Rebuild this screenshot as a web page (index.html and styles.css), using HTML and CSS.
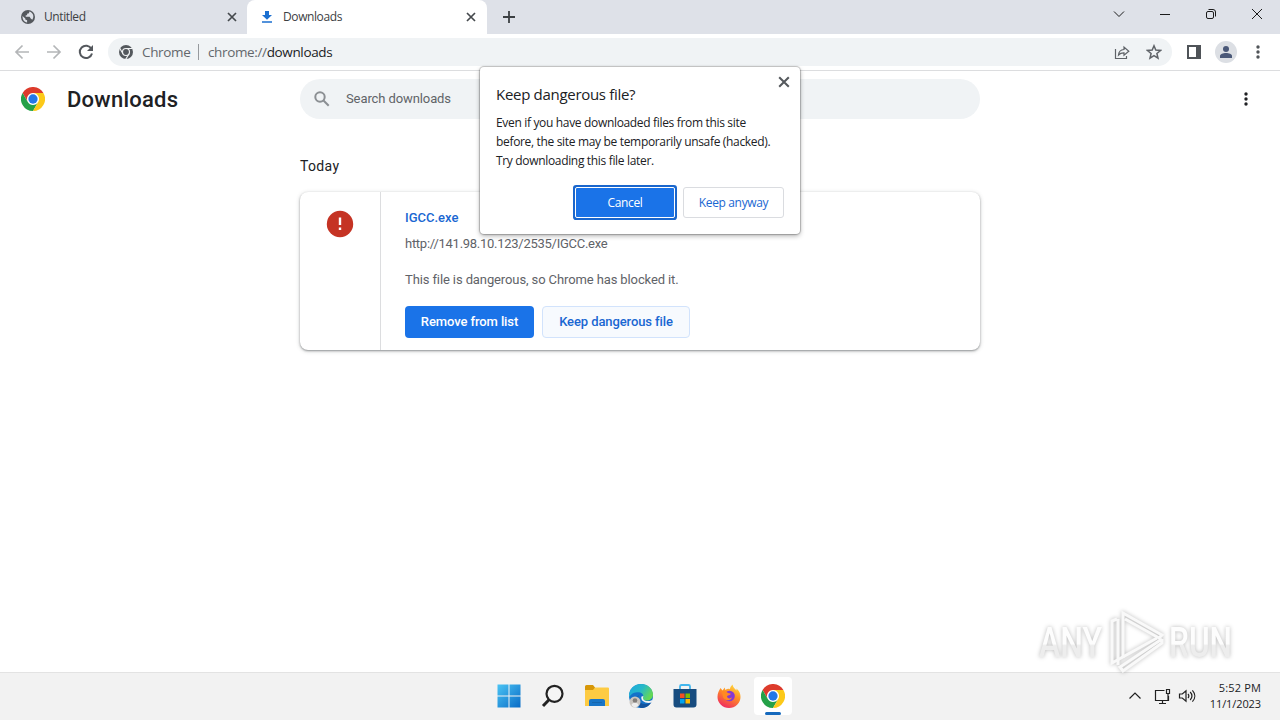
FILE: index.html
```html
<!DOCTYPE html>
<html lang="en">
<head>
  <meta charset="utf-8">
  <title>Downloads</title>
  <link rel="stylesheet" href="styles.css">
</head>

<body>
<svg class="symbols" width="0" height="0">
  <symbol id="chrome" viewBox="0 0 48 48">
    <circle cx="24" cy="24" r="13" fill="#fff"/>
    <path fill="#dd3b2c" d="M24 12H44.8A24 24 0 0 0 3.2 12L13.6 30A12 12 0 0 1 24 12z"/>
    <path fill="#24a148" d="M13.6 30L3.2 12A24 24 0 0 0 24 48L34.4 30A12 12 0 0 1 13.6 30z"/>
    <path fill="#fcc919" d="M34.4 30L24 48A24 24 0 0 0 44.8 12H24A12 12 0 0 1 34.4 30z"/>
    <circle cx="24" cy="24" r="9.3" fill="#2377e8"/>
  </symbol>
  <symbol id="close" viewBox="0 0 10 10">
    <path d="M1 1l8 8M9 1l-8 8" fill="none" stroke="currentColor" stroke-width="1.7"/>
  </symbol>
  <symbol id="dots" viewBox="0 0 4 14">
    <circle cx="2" cy="2" r="1.7"/><circle cx="2" cy="7" r="1.7"/><circle cx="2" cy="12" r="1.7"/>
  </symbol>
</svg>

<div class="tab-strip">
  <div class="tab">
    <svg class="globe" width="14" height="14" viewBox="0 0 14 14">
      <circle cx="7" cy="7" r="7" fill="#54585d"/>
      <path d="M1.5 5.9L4.3 8.6V9.4L6.1 10.3V12.4C3.2 12 1.4 9.6 1.5 5.9zM8.3 1.6L8 3.3L6.1 3.7V5.3H4.7V6.7H8.6L9.7 8.6L11.3 9.7C13.3 7 12.6 2.9 8.3 1.6z" fill="#dee1e8"/>
    </svg>
    <span class="tab-title">Untitled</span>
    <svg class="tab-close" width="10" height="10"><use href="#close"/></svg>
  </div>
  <div class="tab active">
    <svg class="down" width="12" height="14" viewBox="0 0 12 14">
      <path d="M4 1h4v4h3L6 9.700L1 5h3zM1 11.200h10v1.600H1z" fill="#1b6fd0"/>
    </svg>
    <span class="tab-title">Downloads</span>
    <svg class="tab-close" width="10" height="10"><use href="#close"/></svg>
  </div>
  <svg class="new-tab" width="12" height="12" viewBox="0 0 12 12"><path d="M6 0v12M0 6h12" stroke="#3c4043" stroke-width="1.800"/></svg>
  <div class="window-buttons">
    <svg width="12" height="12" viewBox="0 0 12 12"><path d="M1 3.500l5 5 5-5"/></svg>
    <svg width="12" height="12" viewBox="0 0 12 12"><path d="M1 6.500h10"/></svg>
    <svg width="12" height="12" viewBox="0 0 12 12"><rect x="1.500" y="3.500" width="7" height="7" rx="1.500"/><path d="M3.500 1.500h4.500a2.500 2.500 0 0 1 2.500 2.500v4.500"/></svg>
    <svg width="12" height="12" viewBox="0 0 12 12"><path d="M1 1l10 10M11 1l-10 10"/></svg>
  </div>
</div>

<div class="toolbar">
  <svg class="nav" width="16" height="16" viewBox="0 0 16 16"><path d="M15 8H2M8.500 1.500L2 8l6.500 6.500"/></svg>
  <svg class="nav" width="16" height="16" viewBox="0 0 16 16"><path d="M1 8h13M7.500 1.500L14 8l-6.500 6.500"/></svg>
  <svg class="nav reload" width="16" height="16" viewBox="0 0 16 16"><path d="M13.400 4.800A6.200 6.200 0 1 0 14 9.500"/><path class="head" d="M15 1v6H9z"/></svg>
  <div class="omnibox">
    <svg width="14" height="14" viewBox="0 0 48 48">
      <circle cx="24" cy="24" r="24" fill="#54585d"/>
      <circle cx="24" cy="24" r="12" fill="none" stroke="#f1f3f4" stroke-width="4"/>
      <path d="M24 12H46M13.600 30L2.500 11M34.400 30L23 49" stroke="#f1f3f4" stroke-width="4"/>
    </svg>
    <span class="chip">Chrome</span>
    <span class="url">chrome://<b>downloads</b></span>
    <svg class="share" width="16" height="16" viewBox="0 0 16 16">
      <path d="M1.500 5v9.500h11V12M4.500 11C4.800 7.500 6.500 5.700 10 5.500V3l4.800 4.200L10 11.200V8.800C7.500 8.700 6 9.300 4.500 11z"/>
    </svg>
    <svg class="star" width="16" height="16" viewBox="0 0 16 16">
      <path d="M8 1.800l1.800 4.300 4.700.4-3.600 3 1.100 4.600L8 11.700l-4 2.400 1.100-4.600-3.600-3 4.700-.4z"/>
    </svg>
  </div>
  <svg class="panel" width="14" height="14" viewBox="0 0 14 14"><path d="M0 0h14v14H0zM2 2v10h7V2z" fill="#4f5358" fill-rule="evenodd"/></svg>
  <svg class="avatar" width="22" height="22" viewBox="0 0 22 22"><circle cx="11" cy="11" r="11" fill="#dcdfe4"/><circle cx="11" cy="8" r="3" fill="#4a5878"/><path d="M5 17v-2c0-2 3-3 6-3s6 1 6 3v2z" fill="#4a5878"/></svg>
  <svg class="menu" width="4" height="14"><use href="#dots"/></svg>
</div>

<main class="page">
  <header class="page-header">
    <svg class="logo" width="24" height="24"><use href="#chrome"/></svg>
    <h1>Downloads</h1>
    <div class="search">
      <svg width="16" height="16" viewBox="0 0 16 16"><circle cx="6" cy="6" r="4.700"/><path d="M9.500 9.500l5.200 5.200"/></svg>
      <span>Search downloads</span>
    </div>
    <svg class="more" width="4" height="14"><use href="#dots"/></svg>
  </header>

  <section class="downloads">
    <h2>Today</h2>
    <div class="card">
      <div class="card-icon">
        <svg width="28" height="28" viewBox="0 0 28 28"><circle cx="14" cy="14" r="13.200" fill="#c53324"/><path d="M12.800 7.500h2.400v7.500h-2.400zM12.800 17.500h2.400v2.500h-2.400z" fill="#fff"/></svg>
      </div>
      <div class="card-body">
        <a class="file-name">IGCC.exe</a>
        <span class="file-url">http://141.98.10.123/2535/IGCC.exe</span>
        <p>This file is dangerous, so Chrome has blocked it.</p>
        <div class="actions">
          <button class="primary remove">Remove from list</button>
          <button class="keep">Keep dangerous file</button>
        </div>
      </div>
    </div>
  </section>
</main>

<div class="dialog">
  <svg class="dialog-close" width="12" height="12"><use href="#close"/></svg>
  <h3>Keep dangerous file?</h3>
  <p>
    Even if you have downloaded files from this site<br>
    before, the site may be temporarily unsafe (hacked).<br>
    Try downloading this file later.
  </p>
  <div class="dialog-actions">
    <button class="primary cancel">Cancel</button>
    <button class="anyway">Keep anyway</button>
  </div>
</div>

<svg class="watermark" width="230" height="76" viewBox="0 0 230 76">
  <defs>
    <linearGradient id="fade" gradientUnits="userSpaceOnUse" x1="0" y1="20" x2="0" y2="56">
      <stop offset=".55" stop-color="#fdfdfd"/><stop offset=".6" stop-color="#ededed"/>
    </linearGradient>
  </defs>
  <g class="wm-text" fill="url(#fade)">
    <text x="9" y="53" textLength="63" lengthAdjust="spacingAndGlyphs">ANY</text>
    <text x="139" y="53" textLength="63" lengthAdjust="spacingAndGlyphs">RUN</text>
  </g>
  <g class="wm-logo">
    <path d="M87 15L82 17V59L127 34"/>
    <path d="M88 61V15"/>
    <path d="M93 54V9L132 31L129 34L95 15"/>
    <path d="M132 35V39L93 67L90 63L132 35"/>
  </g>
</svg>

<footer class="taskbar">
  <div class="apps">
    <div class="app">
      <svg width="24" height="24" viewBox="0 0 24 24">
        <defs><linearGradient id="win" gradientUnits="userSpaceOnUse" x1="0" y1="0" x2="24" y2="24"><stop offset="0" stop-color="#4cc6f5"/><stop offset="1" stop-color="#0869c5"/></linearGradient></defs>
        <path d="M.5.5h11v11H.5zM12.500.5h11v11h-11zM.5 12.500h11v11H.5zM12.500 12.500h11v11h-11z" fill="url(#win)"/>
      </svg>
    </div>
    <div class="app">
      <svg width="24" height="24" viewBox="0 0 24 24"><circle cx="13.500" cy="9.800" r="8" fill="#f5f5f5" stroke="#222" stroke-width="2.200"/><path d="M8 15.800L2 22" stroke="#222" stroke-width="3"/></svg>
    </div>
    <div class="app">
      <svg width="26" height="24" viewBox="0 0 26 24">
        <path d="M1 2.500a1.500 1.500 0 0 1 1.500-1.500H9l2 2.500v4H1z" fill="#d79708"/>
        <path d="M1 6h8l2-2.500h13a1 1 0 0 1 1 1V22H1z" fill="#fdcb43"/>
        <path d="M5 22v-5a2 2 0 0 1 2-2h12a2 2 0 0 1 2 2v5z" fill="#1875c7"/><path d="M8 18.500h10" stroke="#1566ad"/>
      </svg>
    </div>
    <div class="app">
      <svg width="24" height="24" viewBox="0 0 24 24">
        <defs><linearGradient id="edge" x1="0" y1="0" x2="1" y2=".5"><stop offset="0" stop-color="#1ca7e0"/><stop offset=".55" stop-color="#27b9c7"/><stop offset="1" stop-color="#65d855"/></linearGradient></defs>
        <circle cx="12" cy="12" r="12" fill="#1472c9"/>
        <path d="M0 11C.5 4.500 5.700 0 12 0c7 0 12 5 12 10.500 0 4-3 6-6.500 6-3 0-4.500-1-3.500-3 1.500-4-3-5.700-6-5.200C4 8.500 1 11 0 14z" fill="url(#edge)"/>
        <path d="M11 10c-4 3-2 10 5 10 2.500 0 4.500-.5 6.500-2C20 22.500 16 24 12 24 7 22 5 14 11 10z" fill="#12539e"/>
        <path d="M14.500 12c-1.500 3 .5 5 4.500 5 2.500 0 4-.7 5-1.500l-1.500 3C17 20 11 17 12.500 12.500z" fill="#f3f3f3"/>
        <circle cx="6" cy="18" r="5.500" fill="#c9c5c0"/><circle cx="6" cy="16.500" r="2.300" fill="#817d7a"/><path d="M2.500 21c1-3 6-3 7 0-2 3-5 3-7 0z" fill="#eee"/>
      </svg>
    </div>
    <div class="app">
      <svg width="24" height="24" viewBox="0 0 24 24">
        <path d="M7 7V2.500A1.500 1.500 0 0 1 8.500 1h7A1.500 1.500 0 0 1 17 2.500V7" fill="none" stroke="#42b6ed" stroke-width="1.800"/>
        <path d="M.5 5h23v15.500a3 3 0 0 1-3 3h-17a3 3 0 0 1-3-3z" fill="#174c7f"/>
        <path d="M7 9.500h4.500V14H7z" fill="#f25022"/><path d="M12.500 9.500H17V14h-4.500z" fill="#7fba00"/><path d="M7 15h4.500v4.500H7z" fill="#00a4ef"/><path d="M12.500 15H17v4.500h-4.500z" fill="#ffb900"/>
      </svg>
    </div>
    <div class="app">
      <svg width="24" height="24" viewBox="0 0 24 24">
        <defs><linearGradient id="fox" x1=".8" y1="0" x2=".3" y2="1"><stop offset="0" stop-color="#ffe040"/><stop offset=".45" stop-color="#ff8c25"/><stop offset="1" stop-color="#ef2962"/></linearGradient></defs>
        <path d="M3.500 4L5.500 6.500 7.800 3.500 8.300 6C10 5 11.500 4.500 13 5.200 13 3.500 14 2 15.500.5 16 3.500 18 5 19.500 6.500V4.500C22.500 7 23.500 10 23.500 13A11.500 11 0 0 1 .5 13C.5 9 2 6.500 3.500 4z" fill="url(#fox)"/>
        <circle cx="12.500" cy="12" r="5.300" fill="#8638d5"/><path d="M5 8c3-1 5 0 6 1l3 .8c-1 2-3 1.200-4 2.500 0 2 3 3 5 1-1 4-7 4-9 0z" fill="#ff8a23"/>
      </svg>
    </div>
    <div class="app open"><svg width="24" height="24"><use href="#chrome"/></svg></div>
  </div>
  <div class="tray">
    <svg width="12" height="8" viewBox="0 0 12 8"><path d="M.5 6.500L6 1l5.500 5.500"/></svg>
    <svg class="network" width="17" height="17" viewBox="0 0 17 17"><path d="M10.500 2.500h-9v10h13V8M5 15.500h7M8.500 12.500v3M12.500 1.500h3v4h-3zM14 5.500v7"/></svg>
    <svg class="volume" width="18" height="16" viewBox="0 0 18 16"><path d="M1.500 6h2.800L8 2.800v10.400L4.300 10H1.500zM10 6c1 1.200 1 2.800 0 4M12.200 4c2.200 2.500 2.200 5.500 0 8M14.400 2.300c3.200 3.500 3.200 8 0 11.400"/></svg>
    <div class="clock"><span class="time">5:52 PM</span><span>11/1/2023</span></div>
  </div>
</footer>
</body>
</html>
```
FILE: styles.css
```css
* {
  box-sizing: border-box;
}

body {
  margin: 0;
  width: 1280px;
  height: 720px;
  overflow: hidden;
  display: flex;
  flex-direction: column;
  position: relative;
  background: #fff;
  color: #202124;
  font-family: "Open Sans", "Noto Sans", sans-serif;
}

svg {
  display: block;
  flex: none;
}

.symbols {
  position: absolute;
}

h1, h2, h3, p {
  margin: 0;
}

button {
  padding: 0;
  white-space: nowrap;
}

/* browser window */
.tab-strip {
  height: 34px;
  flex: none;
  display: flex;
  align-items: center;
  background: #dee1e8;
}

.tab {
  width: 247px;
  height: 34px;
  padding: 0 10px 0 21px;
  display: flex;
  align-items: center;
}

.tab.active {
  width: 240px;
  padding: 0 11px 0 14px;
  background: #fff;
  border-radius: 8px 8px 0 0;
}

.tab-title {
  margin-left: 9px;
  padding-bottom: 1px;
  flex: 1;
  font-size: 12px;
  letter-spacing: -0.4px;
  color: #3c4043;
}

.tab.active .tab-title {
  margin-left: 10px;
}

.tab-close {
  color: #45494d;
}

.new-tab {
  margin-left: 16px;
}

.window-buttons {
  margin-left: auto;
  padding-right: 17px;
  margin-bottom: 6px;
  display: flex;
  gap: 34px;
}

.window-buttons path, .window-buttons rect {
  fill: none;
  stroke: #1b1b1b;
  stroke-width: 1;
}

.toolbar {
  height: 37px;
  flex: none;
  display: flex;
  align-items: center;
  padding: 0 20px 0 14px;
  border-bottom: 1px solid #dcdddf;
}

.nav {
  margin-right: 16px;
  fill: none;
  stroke: #b4b6b8;
  stroke-width: 1.7;
}

.nav.reload {
  margin-right: 14px;
  stroke: #54585d;
  stroke-width: 2;
}

.nav .head {
  fill: #54585d;
  stroke: none;
}

.omnibox {
  width: 1064px;
  height: 28px;
  padding: 0 10px 0 11px;
  display: flex;
  align-items: center;
  background: #f0f3f5;
  border-radius: 14px;
  font-size: 13.5px;
  color: #63676c;
}

.chip {
  width: 57px;
  margin-left: 9px;
  line-height: 16px;
  border-right: 1px solid #96999d;
  letter-spacing: -0.35px;
}

.url {
  flex: 1;
  margin-left: 9px;
  letter-spacing: -0.36px;
}

.url b {
  font-weight: normal;
  color: #202124;
}

.share, .star {
  fill: none;
  stroke: #5f6368;
  stroke-width: 1.2;
}

.star {
  margin-left: 16px;
  stroke-width: 1.5;
}

.panel {
  margin-left: 15px;
}

.avatar {
  margin-left: 14px;
}

.menu {
  margin-left: auto;
  fill: #505458;
}

/* downloads page */
.page {
  flex: 1;
  font-family: Roboto, sans-serif;
}

.page-header {
  height: 56px;
  display: flex;
  align-items: center;
  padding: 0 32px 0 21px;
}

h1 {
  width: 233px;
  margin-left: 22px;
  font-size: 22px;
  font-weight: 500;
  letter-spacing: 0.25px;
}

.search {
  width: 680px;
  height: 40px;
  padding-left: 14px;
  display: flex;
  align-items: center;
  gap: 16px;
  background: #f0f3f5;
  border-radius: 20px;
  font-size: 13px;
  letter-spacing: -0.1px;
  color: #5f6368;
}

.search span {
  padding-bottom: 2px;
}

.search svg {
  fill: none;
  stroke: #8b8f93;
  stroke-width: 2;
}

.more {
  margin-left: auto;
  fill: #202124;
}

.downloads {
  width: 680px;
  margin: 29px auto 0;
}

h2 {
  font-size: 14px;
  line-height: 20px;
  font-weight: 400;
  letter-spacing: 0.35px;
}

.card {
  height: 158px;
  margin-top: 16px;
  display: flex;
  border-radius: 8px;
  box-shadow: 0 1px 2px rgba(60, 64, 67, 0.45), 0 1px 4px rgba(60, 64, 67, 0.25);
}

.card-icon {
  width: 81px;
  padding: 18px 0 0 26px;
  border-right: 1px solid #dcdddf;
}

.card-body {
  padding: 16px 24px;
  display: flex;
  flex-direction: column;
  align-items: flex-start;
  font-size: 13px;
  line-height: 20px;
  color: #5f6368;
}

.file-name {
  font-weight: 500;
  color: #1967d2;
}

.file-url {
  margin-top: 6px;
  letter-spacing: -0.27px;
}

.card-body p {
  margin-top: 16px;
  letter-spacing: -0.11px;
}

.actions {
  display: flex;
  gap: 8px;
  margin-top: 16px;
}

.actions button {
  height: 32px;
  padding-bottom: 1px;
  border-radius: 4px;
  font: 500 13px Roboto, sans-serif;
  letter-spacing: -0.1px;
}

.primary {
  color: #fff;
  background: #1a73e8;
  border: 0;
}

.remove {
  width: 129px;
}

.keep {
  width: 148px;
  color: #1967d2;
  background: #f7fafe;
  border: 1px solid #d2e3fc;
}

/* confirmation bubble over the page */
.dialog {
  position: absolute;
  left: 480px;
  top: 67px;
  width: 320px;
  height: 167px;
  padding: 16px;
  background: #fff;
  border-radius: 4px;
  box-shadow: 0 0 1px 1px rgba(0, 0, 0, 0.22), 0 2px 5px rgba(0, 0, 0, 0.3);
}

.dialog-close {
  position: absolute;
  right: 10px;
  top: 9px;
  color: #55595d;
}

h3 {
  font-size: 15px;
  line-height: 23px;
  font-weight: 400;
  letter-spacing: -0.3px;
}

.dialog p {
  margin-top: 7px;
  font-size: 12px;
  line-height: 19px;
  letter-spacing: -0.33px;
  white-space: nowrap;
}

.dialog-actions {
  display: flex;
  justify-content: flex-end;
  gap: 8px;
  margin-top: 17px;
}

.dialog-actions button {
  height: 31px;
  border-radius: 3px;
  font: 12px "Open Sans", sans-serif;
  letter-spacing: -0.35px;
}

.dialog-actions .cancel {
  width: 98px;
  height: 29px;
  margin: 1px 1px 0 0;
  outline: 1px solid #fff;
  box-shadow: 0 0 0 3px #1a66cc;
  border-radius: 1px;
}

.anyway {
  width: 101px;
  color: #1967d2;
  background: #fff;
  border: 1px solid #dadce0;
}

.watermark {
  position: absolute;
  left: 1030px;
  top: 604px;
  z-index: 1;
  filter: drop-shadow(0 0 2px rgba(0, 0, 0, 0.27));
}

.wm-text {
  font: 500 42px Roboto, sans-serif;
}

.wm-logo {
  fill: none;
  stroke: #f9f9f9;
  stroke-width: 3;
}

/* taskbar */
.taskbar {
  height: 48px;
  flex: none;
  display: grid;
  grid-template-columns: 487px 1fr auto;
  background: #f2f2f2;
  border-top: 1px solid #e3e3e3;
}

.apps {
  grid-column: 2;
  padding-bottom: 1px;
  display: flex;
  align-items: center;
}

.app {
  width: 44px;
  height: 40px;
  display: flex;
  align-items: center;
  justify-content: center;
}

.app.open {
  width: 38px;
  height: 38px;
  margin-left: 3px;
  background: #fff;
  border-radius: 4px;
  position: relative;
}

.app.open::after {
  content: "";
  position: absolute;
  left: 11px;
  bottom: 0;
  width: 16px;
  height: 3px;
  border-radius: 2px;
  background: #1569bd;
}

.tray {
  display: flex;
  align-items: center;
  padding: 0 19px 1px 0;
}

.tray svg {
  fill: none;
  stroke: #202020;
  stroke-width: 1.2;
}

.network {
  margin-left: 13px;
}

.volume {
  margin-left: 7px;
}

.clock {
  width: 65px;
  display: flex;
  flex-direction: column;
  align-items: flex-end;
  font-size: 11px;
  line-height: 16px;
  letter-spacing: -0.1px;
}

.time {
  letter-spacing: 0.15px;
}
```
